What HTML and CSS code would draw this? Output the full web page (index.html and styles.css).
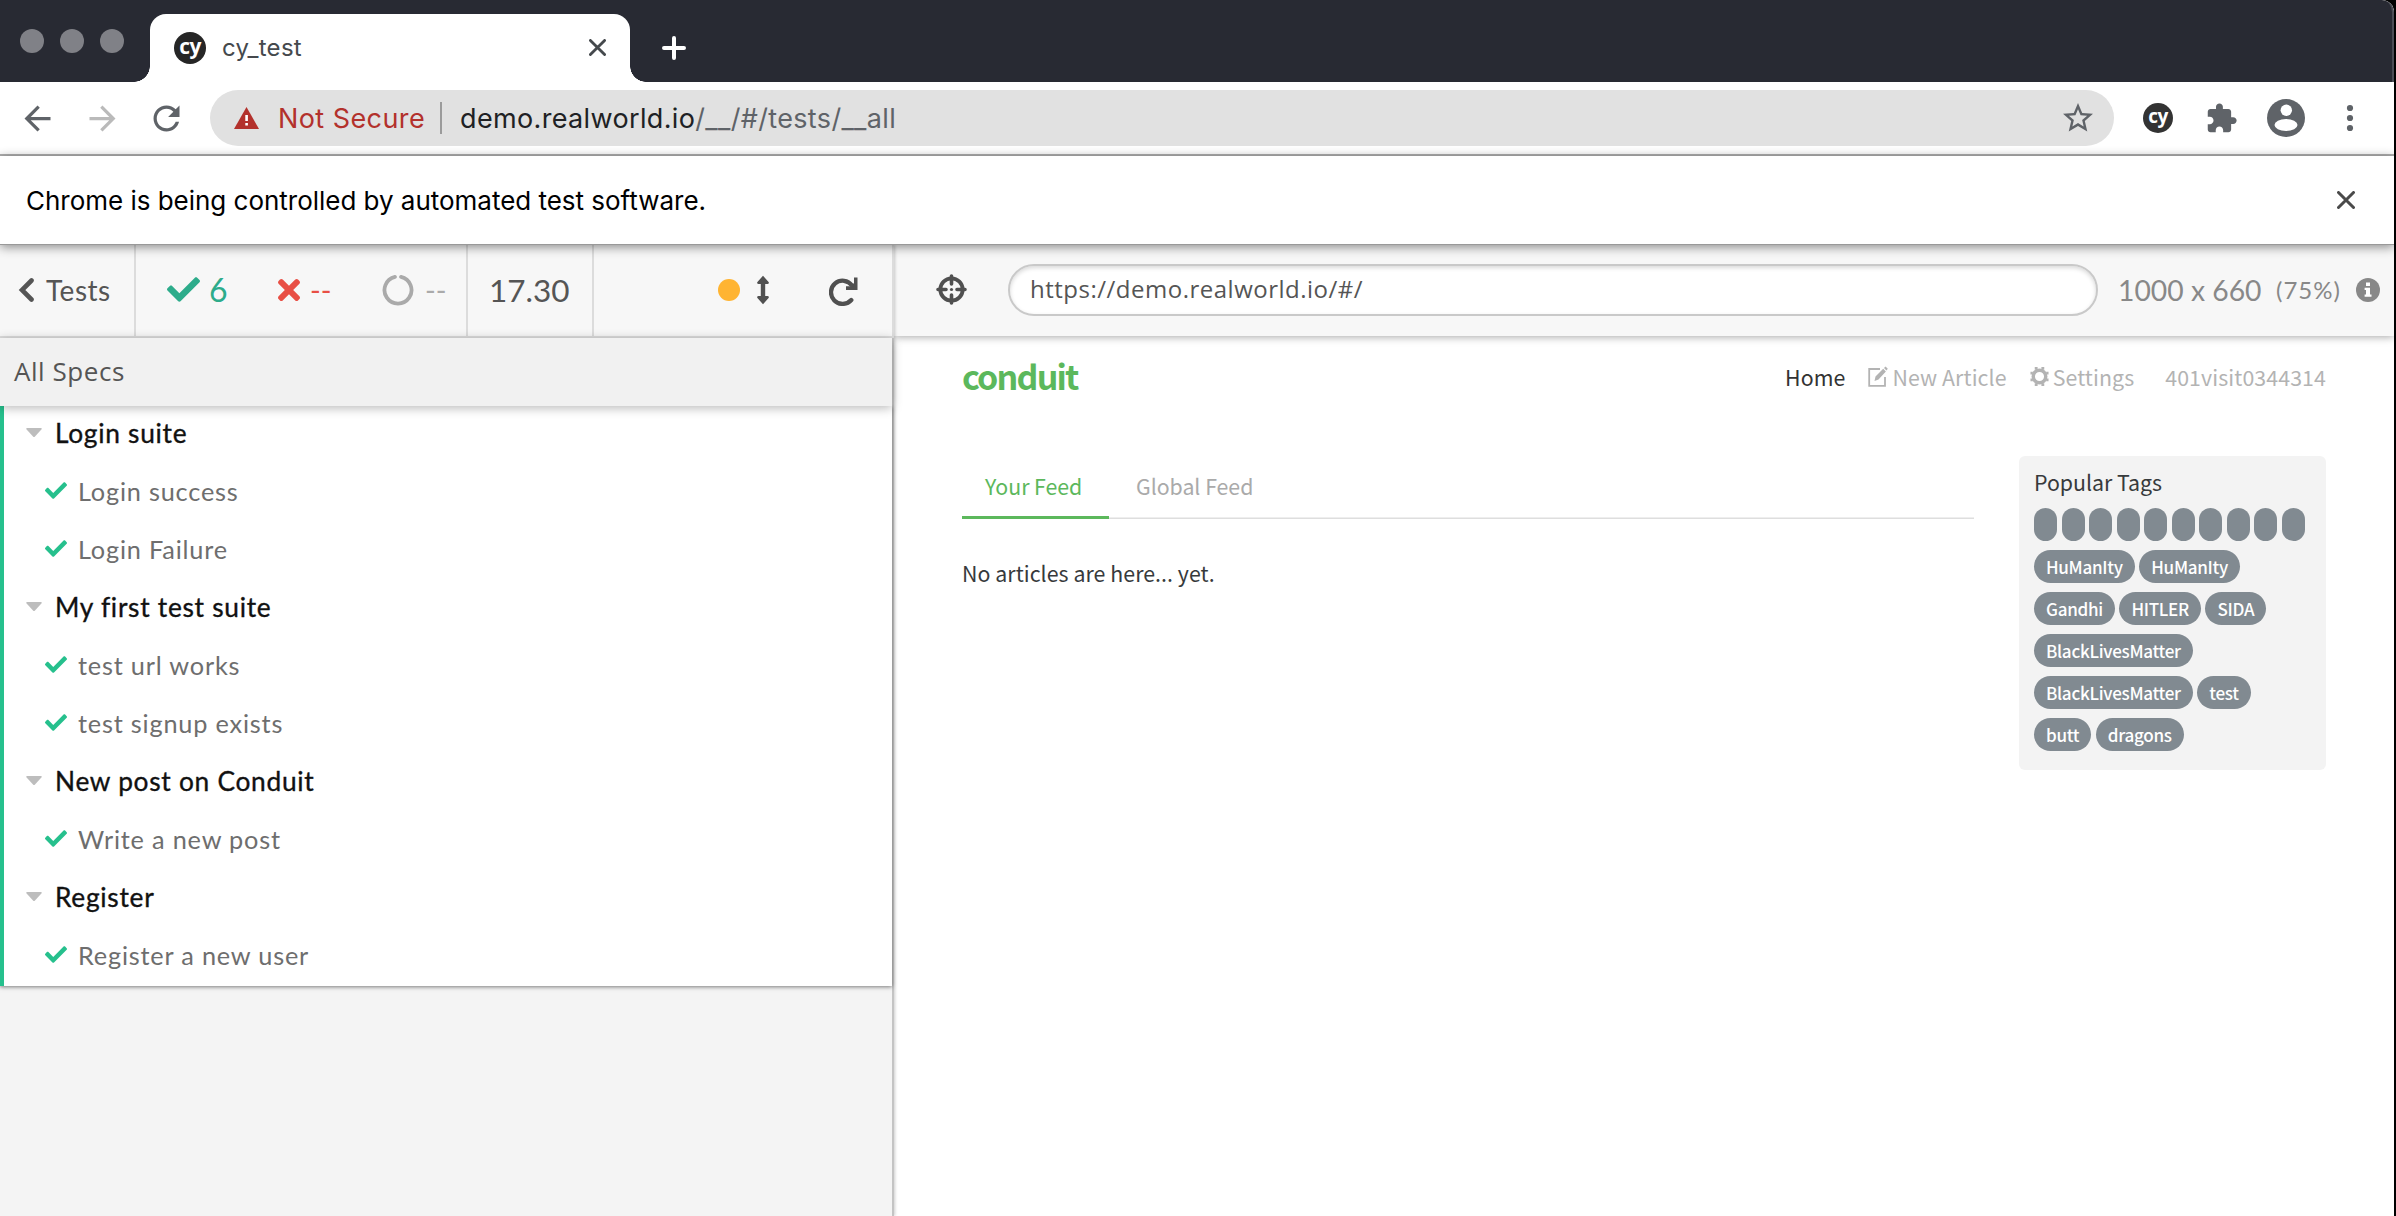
FILE: index.html
```
<!DOCTYPE html>
<html lang="en">
<head>
<meta charset="utf-8">
<title>cy_test</title>
<link rel="stylesheet" href="styles.css">
</head>
<body>
<svg class="defs" width="0" height="0" aria-hidden="true">
  <symbol id="check" viewBox="0 64 512 384"><path d="M173.898 439.404l-166.4-166.4c-9.997-9.997-9.997-26.206 0-36.204l36.203-36.204c9.997-9.998 26.207-9.998 36.204 0L192 312.69 432.095 72.596c9.997-9.997 26.207-9.997 36.204 0l36.203 36.204c9.997 9.997 9.997 26.206 0 36.204l-294.4 294.401c-9.998 9.997-26.207 9.997-36.204-.001z"/></symbol>
  <symbol id="caret" viewBox="0 0 16 10"><path d="M1 0H15Q16.300 .3 15.400 1.500L9 8.600Q8 9.600 7 8.600L.6 1.500Q-.3 .3 1 0Z"/></symbol>
  <symbol id="close" viewBox="0 0 18 18"><path d="M1.500 1.500L16.500 16.500M16.500 1.500L1.500 16.500" fill="none" stroke="currentColor" stroke-width="3" stroke-linecap="round"/></symbol>
</svg>
<div class="window">
  <header class="tabstrip">
    <div class="lights"><i></i><i></i><i></i></div>
    <div class="browser-tab">
      <span class="cy-logo">cy</span>
      <span class="tab-title">cy_test</span>
      <svg class="tab-close" width="17" height="17"><use href="#close"/></svg>
    </div>
    <svg class="new-tab" width="24" height="24" viewBox="0 0 24 24"><path d="M12 2V22M2 12H22" stroke="#fff" stroke-width="4" stroke-linecap="round"/></svg>
  </header>

  <div class="toolbar">
    <svg class="tb back" viewBox="0 0 24 24"><path d="M20 11H7.830l5.590-5.590L12 4l-8 8 8 8 1.410-1.410L7.830 13H20v-2z"/></svg>
    <svg class="tb forward" viewBox="0 0 24 24"><path d="M12 4l-1.410 1.410L16.170 11H4v2h12.170l-5.580 5.590L12 20l8-8z"/></svg>
    <svg class="tb reload" viewBox="0 0 24 24"><path d="M17.650 6.350C16.200 4.900 14.210 4 12 4c-4.420 0-7.990 3.580-7.990 8s3.570 8 7.990 8c3.730 0 6.840-2.550 7.730-6h-2.080c-.82 2.330-3.040 4-5.650 4-3.310 0-6-2.690-6-6s2.690-6 6-6c1.660 0 3.140.69 4.220 1.780L13 11h7V4l-2.350 2.350z"/></svg>
    <div class="omnibox">
      <svg class="warn" width="25" height="22" viewBox="0 0 25 22"><path d="M12.500 0L25 22H0Z" fill="#b3312c"/><path d="M11.300 8h2.600v6h-2.600zM11.300 16h2.600v2.600h-2.600z" fill="#fff"/></svg>
      <span class="not-secure">Not Secure</span>
      <span class="omni-rule"></span>
      <span class="omni-url">demo.realworld.io<span class="path">/__/#/tests/__all</span></span>
      <svg class="star" width="36" height="36" viewBox="0 0 24 24"><path d="M22 9.240l-7.190-.62L12 2 9.190 8.630 2 9.240l5.460 4.730L5.820 21 12 17.270 18.180 21l-1.630-7.030L22 9.240zM12 15.400l-3.760 2.270 1-4.280-3.320-2.880 4.380-.38L12 6.100l1.710 4.040 4.380.38-3.320 2.880 1 4.280L12 15.400z"/></svg>
    </div>
    <span class="cy-logo cy-ext">cy</span>
    <svg class="puzzle" width="33" height="33" viewBox="0 0 24 24"><path d="M20.500 11H19V7c0-1.100-.9-2-2-2h-4V3.500C13 2.120 11.880 1 10.500 1S8 2.120 8 3.500V5H4c-1.100 0-1.990.9-1.990 2v3.800H3.500c1.490 0 2.700 1.210 2.700 2.700s-1.210 2.700-2.700 2.700H2V20c0 1.100.9 2 2 2h3.800v-1.500c0-1.490 1.210-2.700 2.700-2.700 1.490 0 2.700 1.210 2.700 2.700V22H17c1.100 0 2-.9 2-2v-4h1.500c1.380 0 2.500-1.120 2.500-2.500S21.880 11 20.500 11z"/></svg>
    <svg class="person" width="38" height="38" viewBox="0 0 38 38"><circle cx="19" cy="19" r="19"/><circle cx="19.300" cy="11.300" r="5.700" fill="#fff"/><ellipse cx="19" cy="26" rx="11.500" ry="6" fill="#fff"/></svg>
    <svg class="kebab" width="8" height="28" viewBox="0 0 8 28"><circle cx="4" cy="4" r="3.100"/><circle cx="4" cy="14" r="3.100"/><circle cx="4" cy="24" r="3.100"/></svg>
  </div>

  <div class="infobar">
    <span>Chrome is being controlled by automated test software.</span>
    <svg class="info-close" width="18" height="18"><use href="#close"/></svg>
  </div>

  <div class="runner">
    <section class="reporter">
      <div class="stats">
        <a class="back-tests"><svg width="16" height="24" viewBox="0 0 16 24"><path d="M13.500 2.500L4 12L13.500 21.500" fill="none" stroke="#555" stroke-width="4.600" stroke-linecap="round"/></svg><span>Tests</span></a>
        <div class="counts">
          <span class="count passed"><svg width="33" height="25"><use href="#check"/></svg><b>6</b></span>
          <span class="count failed"><svg width="22" height="22" viewBox="0 80 352 352"><path d="M242.720 256l100.070-100.070c12.280-12.280 12.280-32.190 0-44.480l-22.240-22.240c-12.280-12.280-32.190-12.280-44.480 0L176 189.280 75.930 89.210c-12.280-12.280-32.190-12.280-44.480 0L9.210 111.450c-12.280 12.280-12.280 32.190 0 44.480L109.280 256 9.210 356.070c-12.280 12.280-12.280 32.190 0 44.480l22.240 22.240c12.280 12.280 32.200 12.280 44.480 0L176 322.720l100.070 100.070c12.280 12.280 32.200 12.280 44.480 0l22.240-22.240c12.280-12.280 12.280-32.190 0-44.480L242.720 256z"/></svg><b>--</b></span>
          <span class="count pending"><svg width="32" height="32" viewBox="0 0 32 32"><path d="M19 2.900A13.500 13.500 0 1 1 13 2.900" fill="none" stroke="#aaa" stroke-width="3.800" stroke-linecap="round"/></svg><b>--</b></span>
        </div>
        <div class="duration">17.30</div>
        <div class="controls">
          <span class="dot"></span>
          <svg class="updown" width="14" height="30" viewBox="0 0 14 30"><path d="M7 .8L12.800 7.300Q13 9 11.500 9H9.200V21H11.500Q13 21 12.800 22.700L7 29.200L1.200 22.700Q1 21 2.500 21H4.800V9H2.500Q1 9 1.200 7.300Z"/></svg>
          <svg class="rerun" width="30" height="30" viewBox="0 0 30 30"><path d="M22.300 24A11.600 11.600 0 1 1 23 9.500" fill="none" stroke="#505050" stroke-width="4.300" stroke-linecap="round"/><path d="M25 1.500H28.500V14H17V10.200H21.800L25 7Z"/></svg>
        </div>
      </div>
      <div class="specs-title">All Specs</div>
      <ul class="tests">
        <li class="suite"><svg width="16" height="10"><use href="#caret"/></svg>Login suite</li>
        <li class="test"><svg width="22" height="17"><use href="#check"/></svg>Login success</li>
        <li class="test"><svg width="22" height="17"><use href="#check"/></svg>Login Failure</li>
        <li class="suite"><svg width="16" height="10"><use href="#caret"/></svg>My first test suite</li>
        <li class="test"><svg width="22" height="17"><use href="#check"/></svg>test url works</li>
        <li class="test"><svg width="22" height="17"><use href="#check"/></svg>test signup exists</li>
        <li class="suite"><svg width="16" height="10"><use href="#caret"/></svg>New post on Conduit</li>
        <li class="test"><svg width="22" height="17"><use href="#check"/></svg>Write a new post</li>
        <li class="suite"><svg width="16" height="10"><use href="#caret"/></svg>Register</li>
        <li class="test"><svg width="22" height="17"><use href="#check"/></svg>Register a new user</li>
      </ul>
    </section>

    <section class="preview">
      <div class="preview-bar">
        <svg class="crosshair" width="31" height="31" viewBox="0 0 31 31"><circle cx="15.500" cy="15.500" r="11.200" fill="none" stroke="#505050" stroke-width="3.800"/><path d="M15.500 2V10M15.500 21V29M2 15.500H10M21 15.500H29" stroke="#505050" stroke-width="3.600" stroke-linecap="round"/><circle cx="15.500" cy="15.500" r="1.600"/></svg>
        <div class="aut-url">https://demo.realworld.io/#/</div>
        <span class="viewport">1000 x 660</span>
        <span class="scale">(75%)</span>
        <svg class="info" width="24" height="24" viewBox="0 0 24 24"><circle cx="12" cy="12" r="12" fill="#888"/><path d="M10 4.500h4V8h-4zM8.600 9.700H14V16.400h1.500V18.800H8.600V16.400H10V12.100H8.600z" fill="#fff"/></svg>
      </div>
      <div class="app">
        <nav class="app-nav">
          <a class="brand">conduit</a>
          <div class="links">
            <a class="home">Home</a>
            <a class="new-article"><svg width="20" height="21" viewBox="0 0 20 21"><path d="M12 3H1.200V19.800H17V11" fill="none" stroke="#b3b3b3" stroke-width="1.800"/><path d="M6.500 15L7.500 10.500L15.200 2.800L17.900 5.500L10.500 13.500ZM16 2L17.500 .4L19.800 2.800L18.500 4.500Z"/></svg><span>New Article</span></a>
            <a class="settings"><svg width="19" height="21" viewBox="-10 -10.500 20 21"><circle r="6.600" fill="none" stroke="#b3b3b3" stroke-width="3.600"/><path d="M-3.500 -7V-10M3.500 -7V-10M-3.500 7V10M3.500 7V10M-7 -3.500H-9.500M-7 3.500H-9.500M7 -3.500H9.500M7 3.500H9.500" stroke="#b3b3b3" stroke-width="3"/></svg><span>Settings</span></a>
            <a class="user">401visit0344314</a>
          </div>
        </nav>
        <div class="content">
          <main class="feed">
            <div class="feed-tabs"><a class="active">Your Feed</a><a>Global Feed</a></div>
            <p class="empty">No articles are here... yet.</p>
          </main>
          <aside class="tags">
            <p>Popular Tags</p>
            <div class="tag-list">
              <div class="tag-row blank"><i></i><i></i><i></i><i></i><i></i><i></i><i></i><i></i><i></i><i></i></div>
              <div class="tag-row"><span>HuManIty</span><span>HuManIty</span></div>
              <div class="tag-row"><span>Gandhi</span><span>HITLER</span><span>SIDA</span></div>
              <div class="tag-row"><span>BlackLivesMatter</span></div>
              <div class="tag-row"><span>BlackLivesMatter</span><span>test</span></div>
              <div class="tag-row"><span>butt</span><span>dragons</span></div>
            </div>
          </aside>
        </div>
      </div>
    </section>
  </div>
</div>
</body>
</html>
```
FILE: styles.css
```
* { box-sizing: border-box; }
body { margin: 0; background: #000; width: 2396px; height: 1216px; overflow: hidden; }
.defs { position: absolute; }
svg { display: block; flex: none; }
.window {
  width: 2394px; height: 1216px; display: flex; flex-direction: column;
  background: #fff; border-radius: 0 12px 0 0; overflow: hidden;
  font-family: Inter, "Liberation Sans", sans-serif;
}

/* browser tab strip */
.tabstrip {
  height: 82px; flex: none; display: flex; background: #282a33;
  border-right: 2px solid #4b4d55; border-radius: 0 12px 0 0;
}
.lights { display: flex; gap: 16px; padding: 29px 0 0 20px; width: 150px; }
.lights i { width: 24px; height: 24px; border-radius: 50%; background: #808187; }
.browser-tab {
  position: relative; width: 480px; height: 68px; margin-top: 14px; padding: 0 24px 1px 24px;
  display: flex; align-items: center; background: #fff; border-radius: 16px 16px 0 0;
}
.browser-tab::before, .browser-tab::after {
  content: ""; position: absolute; bottom: 0; width: 16px; height: 16px;
}
.browser-tab::before { left: -16px; background: radial-gradient(circle at 0 0, transparent 15.500px, #fff 16px); }
.browser-tab::after { right: -16px; background: radial-gradient(circle at 100% 0, transparent 15.500px, #fff 16px); }
.cy-logo {
  width: 32px; height: 32px; border-radius: 50%; background: #262626; color: #fff; flex: none;
  font: 700 21px/28px "Open Sans", sans-serif; text-align: center; letter-spacing: -.5px;
}
.tab-title { margin-left: 16px; font-size: 24px; letter-spacing: .3px; color: #45494d; }
.tab-close { margin-left: auto; color: #45494d; }
.new-tab { margin: 36px 0 0 32px; }

/* address bar */
.toolbar {
  height: 74px; flex: none; display: flex; align-items: center;
  border-bottom: 2px solid #b1b1b1; fill: #5f6368;
}
.tb { width: 39px; height: 39px; }
.back { margin-left: 18px; }
.forward { margin-left: 26px; fill: #bababa; }
.reload { margin-left: 25px; }
.omnibox {
  width: 1904px; height: 56px; margin-left: 24px; padding: 0 18px 0 24px;
  display: flex; align-items: center; border-radius: 28px; background: #e1e1e1;
  font-size: 27px; color: #202124;
}
.not-secure { margin-left: 18px; width: 163px; padding-left: 1px; color: #b3312c; letter-spacing: .42px; }
.omni-rule { width: 2px; height: 32px; background: #9b9b9b; }
.omni-url { margin-left: 18px; letter-spacing: .35px; }
.path { color: #5f6368; }
.star { margin-left: auto; }
.cy-ext { width: 30px; height: 30px; margin-left: 29px; background: #333; font-size: 19px; line-height: 27px; }
.puzzle { margin-left: 32px; }
.person { margin-left: 29px; }
.kebab { margin-left: 41px; }

/* automation notice */
.infobar {
  position: relative; z-index: 2; height: 89px; flex: none; padding: 0 39px 0 26px;
  display: flex; align-items: center; justify-content: space-between; background: #fff;
  border-bottom: 1px solid #999; box-shadow: 0 2px 10px rgba(0, 0, 0, .45);
  font-size: 26px; letter-spacing: -.02px; color: #000;
}
.info-close { color: #4a4a4a; }

.runner { flex: 1; display: flex; min-height: 0; font-family: Lato, "Open Sans", sans-serif; }

/* test reporter */
.reporter {
  position: relative; z-index: 1; width: 894px; display: flex; flex-direction: column;
  background: #f4f4f4; border-right: 2px solid #c4c4c4; box-shadow: 1px 0 3px rgba(0, 0, 0, .2);
}
.stats {
  height: 93px; flex: none; display: flex; align-items: stretch; margin-right: -2px;
  background: #f7f7f7; border-bottom: 2px solid #dcdcdc; border-right: 2px solid #dcdcdc; color: #555;
}
.stats > * { display: flex; align-items: center; padding-bottom: 2px; }
.back-tests { width: 136px; padding-left: 18px; gap: 12px; border-right: 2px solid #dcdcdc; font-size: 28px; letter-spacing: .5px; }
.counts { width: 332px; padding-left: 31px; border-right: 2px solid #dcdcdc; }
.count { display: flex; align-items: center; }
.count b { font-weight: 400; font-size: 32px; }
.passed { color: #2dac8b; fill: #2dac8b; gap: 9px; width: 111px; }
.failed { color: #e84f45; fill: #e84f45; gap: 10px; width: 104px; }
.pending { color: #aaa; gap: 11px; }
.failed b, .pending b { font-size: 29px; }
.duration { width: 126px; padding-left: 21px; border-right: 2px solid #dcdcdc; font-size: 31.500px; }
.controls { padding-left: 124px; fill: #505050; }
.dot { width: 22px; height: 22px; border-radius: 50%; background: #ffb432; }
.updown { margin-left: 16px; }
.rerun { margin: 3px 0 0 59px; }
.specs-title {
  position: relative; z-index: 1; height: 68px; flex: none; padding: 0 0 3px 14px; background: #f1f1f1;
  box-shadow: 0 2px 10px rgba(0, 0, 0, .28); font: 26px/66px "Open Sans", sans-serif; letter-spacing: .55px; color: #555;
}
.tests {
  list-style: none; margin: 0; padding: 0; background: #fff; border-left: 4px solid #26c08d;
  box-shadow: 0 1px 4px rgba(0, 0, 0, .5);
}
.tests li { height: 58px; padding-bottom: 5px; display: flex; align-items: center; }
.suite { padding-left: 22px; gap: 13px; font-size: 26.300px; letter-spacing: .72px; color: #111; -webkit-text-stroke: .35px #111; }
.suite svg { fill: #bdbdbd; stroke: none; }
.test { padding-left: 41px; gap: 11px; font-size: 25.300px; letter-spacing: .8px; color: #6e6e6e; }
.test svg { fill: #26c08d; }

/* application preview */
.preview { flex: 1; display: flex; flex-direction: column; background: #fff; }
.preview-bar {
  height: 91px; flex: none; padding: 0 14px 2px 42px; display: flex; align-items: center;
  background: #f7f7f7; box-shadow: 0 1px 8px rgba(0, 0, 0, .35); color: #888;
}
.crosshair { fill: #505050; }
.aut-url {
  width: 1090px; height: 52px; margin-left: 41px; padding-left: 20px; border: 2px solid #c9c9c9;
  border-radius: 26px; background: #fff; box-shadow: inset 0 2px 4px rgba(0, 0, 0, .15);
  font: 24px/46px "Open Sans", sans-serif; letter-spacing: .5px; color: #555;
}
.viewport { margin-left: 20px; width: 143px; font-size: 28.300px; white-space: nowrap; }
.scale { margin-left: 15px; width: 64px; font-size: 24px; letter-spacing: 1px; }
.info { margin-left: auto; }

.app { padding: 0 68px; font-family: "Noto Sans CJK SC", "Noto Sans", sans-serif; font-size: 21.330px; letter-spacing: -.03px; color: #373a3c; }
.app-nav { height: 81px; display: flex; align-items: center; justify-content: space-between; line-height: 32px; }
.brand { margin-top: -2px; font-size: 34px; font-weight: 700; letter-spacing: -1.800px; color: #5cb85c; }
.links { display: flex; align-items: center; color: #b3b3b3; fill: #b3b3b3; letter-spacing: .1px; }
.links a { display: flex; align-items: center; gap: 4px; }
.home { margin-right: 23px; color: #333; }
.new-article { margin-right: 23px; }
.settings { margin-right: 31px; }
.content { display: flex; justify-content: space-between; padding-top: 39px; }
.feed { width: 1012px; }
.feed-tabs { height: 63px; display: flex; box-shadow: inset 0 -1.500px #dedede; }
.feed-tabs a { padding: 0 23px; height: 63px; line-height: 59px; color: #aaa; }
.feed-tabs .active { width: 147px; color: #5cb85c; border-bottom: 3px solid #5cb85c; margin-right: 4px; }
.empty { margin: 38px 0 0; line-height: 32px; letter-spacing: .05px; }
.tags { width: 307px; height: 314px; padding: 10px 15px; border-radius: 6px; background: #f3f3f3; }
.tags p { margin: 0 0 9.500px; line-height: 32px; }
.tag-list { display: flex; flex-direction: column; gap: 8px; }
.tag-row { height: 34px; display: flex; gap: 4.500px; }
.tag-row span {
  height: 33px; padding: 0 12px; border-radius: 17px; background: #818a91; color: #fff;
  font-size: 17.070px; line-height: 33px; letter-spacing: -.3px; font-weight: 500;
}
.blank i { width: 23px; height: 33px; border-radius: 12px; background: #818a91; }
```
